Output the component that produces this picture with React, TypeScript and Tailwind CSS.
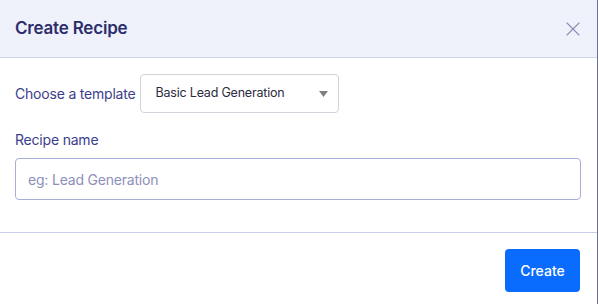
import { X } from "lucide-react";

export default function App() {
    return (
        <div className="w-[598px] h-[304px] bg-white border-r border-[#6f7190] flex flex-col" style={{ fontFamily: "Inter, 'Liberation Sans', sans-serif" }}>
            <div className="h-[58px] bg-[#eff1fb] border-b border-[#cfd3ec] flex items-center justify-between pl-[15px] pr-[12px]">
                <h2 className="text-[17px] font-semibold text-[#2c2e6b] tracking-[-0.2px]">Create Recipe</h2>
                <X className="w-[24px] h-[24px] text-[#8a8db4]" strokeWidth={1.1} />
            </div>
            <div className="px-[15px] pt-[16px] h-[175px] border-b border-[#c9cdeb]">
                <div className="flex items-center gap-[5px]">
                    <label className="text-[14px] text-[#3b3e8c] tracking-[-0.2px]">Choose a template</label>
                    <div className="w-[199px] h-[39px] border border-[#d2d3da] rounded-[4px] flex items-center justify-between pl-[14px] pr-[10px]">
                        <span className="text-[12.5px] text-[#2a2b3d] tracking-[-0.2px]">Basic Lead Generation</span>
                        <svg width="9" height="6" viewBox="0 0 9 6"><path d="M0 0h9L4.5 6z" fill="#808080" /></svg>
                    </div>
                </div>
                <label className="block mt-[16px] text-[14px] text-[#3b3e8c] tracking-[-0.2px]">Recipe name</label>
                <input
                    type="text"
                    placeholder="eg: Lead Generation"
                    className="mt-[8px] w-[566px] h-[42px] border border-[#a8aed8] rounded-[4px] px-[12px] text-[14px] text-[#2a2b3d] placeholder:text-[#8d90b9] outline-none tracking-[-0.2px]"
                />
            </div>
            <div className="flex justify-end pr-[17px] pt-[16px]">
                <button className="w-[75px] h-[43px] bg-[#0a6cff] rounded-[4px] text-white text-[14px] font-medium">Create</button>
            </div>
        </div>
    );
}
